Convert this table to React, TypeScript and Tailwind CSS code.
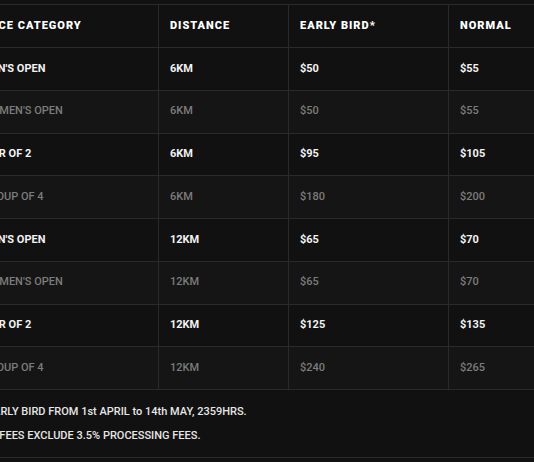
import React from 'react';

type Row = { category: string; distance: string; early: string; normal: string };

const rows: Row[] = [
    { category: "MEN'S OPEN", distance: '6KM', early: '$50', normal: '$55' },
    { category: "WOMEN'S OPEN", distance: '6KM', early: '$50', normal: '$55' },
    { category: 'PAIR OF 2', distance: '6KM', early: '$95', normal: '$105' },
    { category: 'GROUP OF 4', distance: '6KM', early: '$180', normal: '$200' },
    { category: "MEN'S OPEN", distance: '12KM', early: '$65', normal: '$70' },
    { category: "WOMEN'S OPEN", distance: '12KM', early: '$65', normal: '$70' },
    { category: 'PAIR OF 2', distance: '12KM', early: '$125', normal: '$135' },
    { category: 'GROUP OF 4', distance: '12KM', early: '$240', normal: '$265' },
];

const headers = ['RACE CATEGORY', 'DISTANCE', 'EARLY BIRD*', 'NORMAL'];

export default function App() {
    return (
        <div className="w-[534px] h-[462px] overflow-hidden bg-[#111111] pt-[4px] font-['Roboto','Liberation_Sans',sans-serif]">
            <div className="-ml-[29px] w-[640px] border-t border-[#2a2a2a]">
                {/* Header */}
                <div className="grid grid-cols-[188px_130px_160px_162px]">
                    {headers.map((h) => (
                        <div
                            key={h}
                            className="h-[43px] flex items-center px-[11px] border-r border-b border-[#2a2a2a] text-[11px] font-black tracking-[1px] text-white whitespace-nowrap"
                        >
                            {h}
                        </div>
                    ))}
                </div>

                {/* Body */}
                {rows.map((r, i) => {
                    const strong = i % 2 === 0;
                    const cell = `h-[42.75px] flex items-center px-[11px] border-r border-b border-[#2a2a2a] text-[11px] whitespace-nowrap ${
                        strong ? 'text-[#f2f2f2] font-bold' : 'text-[#7c7c7c] font-medium'
                    }`;
                    return (
                        <div
                            key={i}
                            className={`grid grid-cols-[188px_130px_160px_162px] ${strong ? 'bg-[#111111]' : 'bg-[#151515]'}`}
                        >
                            <div className={cell}>{r.category}</div>
                            <div className={cell}>{r.distance}</div>
                            <div className={cell}>{r.early}</div>
                            <div className={cell}>{r.normal}</div>
                        </div>
                    );
                })}

                {/* Notes */}
                <div className="pt-[10px] pb-[9px] px-[11px] border-b border-[#2a2a2a] text-[11px] font-medium text-[#e6e6e6] leading-[24px]">
                    <p>*EARLY BIRD FROM 1st APRIL to 14th MAY, 2359HRS.</p>
                    <p>*** FEES EXCLUDE 3.5% PROCESSING FEES.</p>
                </div>
            </div>
        </div>
    );
}
